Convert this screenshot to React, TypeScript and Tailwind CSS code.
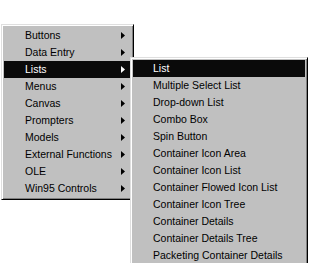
import React from 'react';

const mainItems = [
  'Buttons',
  'Data Entry',
  'Lists',
  'Menus',
  'Canvas',
  'Prompters',
  'Models',
  'External Functions',
  'OLE',
  'Win95 Controls',
];

const subItems = [
  'List',
  'Multiple Select List',
  'Drop-down List',
  'Combo Box',
  'Spin Button',
  'Container Icon Area',
  'Container Icon List',
  'Container Flowed Icon List',
  'Container Icon Tree',
  'Container Details',
  'Container Details Tree',
  'Packeting Container Details',
];

const Arrow: React.FC<{ white?: boolean }> = ({ white }) => (
  <svg width="4" height="7" viewBox="0 0 4 7" className="shrink-0">
    <path d="M0 0 L4 3.5 L0 7 Z" fill={white ? '#fff' : '#000'} />
  </svg>
);

const frame =
  'bg-[#c0c0c0] border border-t-[#dfdfdf] border-l-[#dfdfdf] border-r-black border-b-black shadow-[inset_1px_1px_#fff,inset_-1px_-1px_#808080] p-[2px]';

const App: React.FC = () => {
  return (
    <div
      className="relative w-[310px] h-[263px] bg-white overflow-hidden text-[10.5px] font-normal text-black"
      style={{ fontFamily: '"Liberation Sans", Arial, sans-serif' }}
    >
      <div className={`${frame} absolute left-px top-[24px] w-[133px]`}>
        {mainItems.map((item) => {
          const active = item === 'Lists';
          return (
            <div
              key={item}
              className={`flex items-center h-[17px] pl-[21px] pr-[6px] ${
                active ? 'bg-[#0a0a0a] text-white' : ''
              }`}
            >
              <span className="flex-1 leading-none">{item}</span>
              <Arrow white={active} />
            </div>
          );
        })}
      </div>

      <div className={`${frame} absolute left-[130px] top-[57px] w-[178px] h-[220px]`}>
        {subItems.map((item, i) => (
          <div
            key={item}
            className={`flex items-center h-[17px] pl-[20px] ${
              i === 0 ? 'bg-[#0a0a0a] text-white' : ''
            }`}
          >
            <span className="leading-none">{item}</span>
          </div>
        ))}
      </div>
    </div>
  );
};

export default App;
